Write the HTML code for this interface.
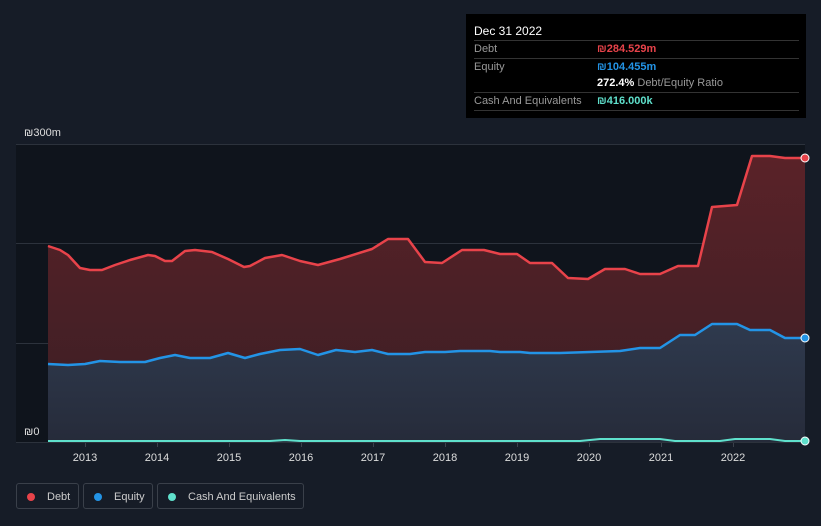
<!DOCTYPE html>
<html><head><style>
body{margin:0;background:#161c27;font-family:"Liberation Sans",sans-serif;width:821px;height:526px;overflow:hidden;position:relative}
.tt{position:absolute;left:466px;top:14px;width:340px;height:104px;background:#000;color:#fff;font-size:11px}
.row{position:absolute;left:8px;width:325px;border-top:1px solid #333;height:17px;line-height:17px}
.l{color:#999}
.v{position:absolute;left:123px}
.lg{position:absolute;top:483px;height:26px;border:1px solid #3a404a;border-radius:3px;color:#ccc;font-size:11px;line-height:26px;box-sizing:border-box}
.dot{display:inline-block;width:8px;height:8px;border-radius:50%;margin:0 12px 0 10px;vertical-align:-1px}
</style></head><body>
<svg width="821" height="526" style="position:absolute;left:0;top:0">
<rect x="16" y="144" width="789" height="298" fill="#0f141c"/>
<g stroke="#2c323c" stroke-width="1">
<line x1="16" y1="144.5" x2="805" y2="144.5"/><line x1="16" y1="243.5" x2="805" y2="243.5"/><line x1="16" y1="343.5" x2="805" y2="343.5"/><line x1="16" y1="442.5" x2="805" y2="442.5"/>
</g>
<g stroke="#3a404a" stroke-width="1">
<line x1="85.5" y1="443" x2="85.5" y2="447"/><line x1="157.5" y1="443" x2="157.5" y2="447"/><line x1="229.5" y1="443" x2="229.5" y2="447"/><line x1="301.5" y1="443" x2="301.5" y2="447"/><line x1="373.5" y1="443" x2="373.5" y2="447"/><line x1="445.5" y1="443" x2="445.5" y2="447"/><line x1="517.5" y1="443" x2="517.5" y2="447"/><line x1="589.5" y1="443" x2="589.5" y2="447"/><line x1="661.5" y1="443" x2="661.5" y2="447"/><line x1="733.5" y1="443" x2="733.5" y2="447"/>
</g>
<defs>
<linearGradient id="dg" x1="0" y1="0" x2="0" y2="1"><stop offset="0" stop-color="#5a2228"/><stop offset="1" stop-color="#3a1e24"/></linearGradient>
<linearGradient id="eg" x1="0" y1="0" x2="0" y2="1"><stop offset="0" stop-color="#2f3a4e"/><stop offset="1" stop-color="#262b3a"/></linearGradient>
</defs>
<path fill="url(#dg)" d="M48,246 L60,250 68,255 80,268 90,270 102,270 115,265 130,260 148,255 155,256 165,261 172,261 185,251 195,250 212,252 228,259 244,267 250,266 265,258 282,255 300,261 318,265 340,259 372,249 388,239 408,239 425,262 442,263 462,250 484,250 500,254 517,254 530,263 552,263 568,278 588,279 605,269 625,269 640,274 660,274 678,266 698,266 712,207 737,205 752,156 770,156 785,158 805,158 L805,442 48,442Z"/>
<path fill="url(#eg)" d="M48,364 L68,365 85,364 100,361 120,362 145,362 160,358 175,355 190,358 210,358 228,353 245,358 260,354 280,350 300,349 318,355 336,350 355,352 372,350 388,354 410,354 425,352 445,352 460,351 490,351 500,352 520,352 530,353 560,353 590,352 620,351 640,348 660,348 680,335 695,335 712,324 737,324 750,330 770,330 785,338 805,338 L805,442 48,442Z"/>
<path fill="none" stroke="#e8434a" stroke-width="2.5" stroke-linejoin="round" d="M48,246 L60,250 68,255 80,268 90,270 102,270 115,265 130,260 148,255 155,256 165,261 172,261 185,251 195,250 212,252 228,259 244,267 250,266 265,258 282,255 300,261 318,265 340,259 372,249 388,239 408,239 425,262 442,263 462,250 484,250 500,254 517,254 530,263 552,263 568,278 588,279 605,269 625,269 640,274 660,274 678,266 698,266 712,207 737,205 752,156 770,156 785,158 805,158"/>
<path fill="none" stroke="#2394e6" stroke-width="2.5" stroke-linejoin="round" d="M48,364 L68,365 85,364 100,361 120,362 145,362 160,358 175,355 190,358 210,358 228,353 245,358 260,354 280,350 300,349 318,355 336,350 355,352 372,350 388,354 410,354 425,352 445,352 460,351 490,351 500,352 520,352 530,353 560,353 590,352 620,351 640,348 660,348 680,335 695,335 712,324 737,324 750,330 770,330 785,338 805,338"/>
<path fill="none" stroke="#5fe0cc" stroke-width="2" d="M48,441 L270,441 285,440 300,441 580,441 600,439 660,439 675,441 720,441 735,439 770,439 785,441 805,441"/>
<circle cx="805" cy="158" r="4" fill="#e8434a" stroke="#fff" stroke-width="1"/>
<circle cx="805" cy="338" r="4" fill="#2394e6" stroke="#fff" stroke-width="1"/>
<circle cx="805" cy="441" r="4" fill="#5fe0cc" stroke="#fff" stroke-width="1"/>
<g fill="#ddd" font-size="11" text-anchor="middle">
<text x="85" y="461">2013</text><text x="157" y="461">2014</text><text x="229" y="461">2015</text><text x="301" y="461">2016</text><text x="373" y="461">2017</text><text x="445" y="461">2018</text><text x="517" y="461">2019</text><text x="589" y="461">2020</text><text x="661" y="461">2021</text><text x="733" y="461">2022</text>
</g>
<text x="24" y="136" fill="#ddd" font-size="11">₪300m</text>
<text x="24" y="435" fill="#ddd" font-size="11">₪0</text>
</svg>
<div class="tt">
<div style="position:absolute;left:8px;top:10px;font-size:12px">Dec 31 2022</div>
<div class="row" style="top:26px"><span class="l">Debt</span><span class="v" style="color:#e8434a;font-weight:bold">₪284.529m</span></div>
<div class="row" style="top:44px"><span class="l">Equity</span><span class="v" style="color:#2394e6;font-weight:bold">₪104.455m</span></div>
<div class="row" style="top:61px;border:none"><span class="v"><b>272.4%</b> <span class="l">Debt/Equity Ratio</span></span></div>
<div class="row" style="top:78px"><span class="l">Cash And Equivalents</span><span class="v" style="color:#5fe0cc;font-weight:bold">₪416.000k</span></div>
<div class="row" style="top:96px;height:0"></div>
</div>
<div class="lg" style="left:16px;width:63px"><span class="dot" style="background:#e8434a"></span>Debt</div>
<div class="lg" style="left:83px;width:70px"><span class="dot" style="background:#2394e6"></span>Equity</div>
<div class="lg" style="left:157px;width:147px"><span class="dot" style="background:#5fe0cc"></span>Cash And Equivalents</div>
</body></html>
